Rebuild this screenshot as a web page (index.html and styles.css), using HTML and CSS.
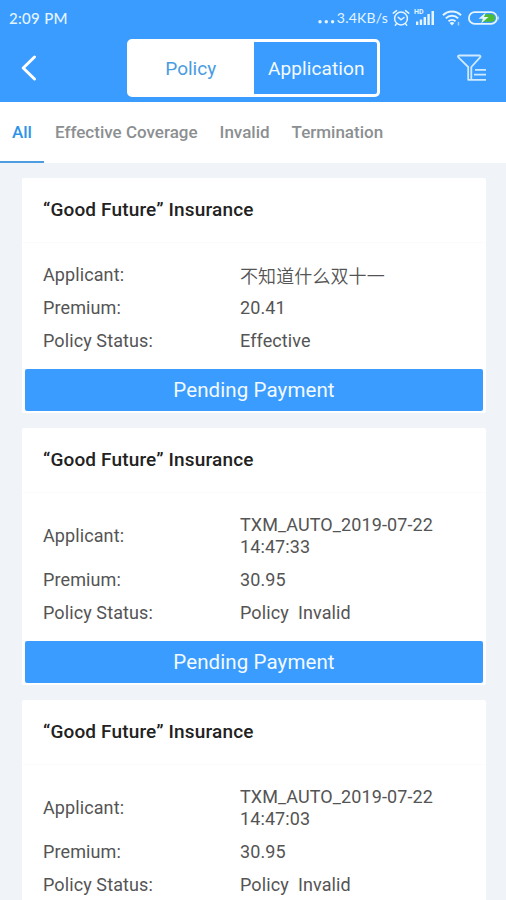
FILE: index.html
```html
<!DOCTYPE html>
<html lang="en">
<head>
<meta charset="utf-8">
<title>Policies</title>
<link rel="stylesheet" href="styles.css">
</head>
<body>
<header class="header">
  <div class="status">
    <span class="clock">2:09 PM</span>
    <svg class="dots" width="17" height="16" viewBox="0 0 17 16"><g fill="currentColor"><circle cx="2" cy="11.7" r="1.7"/><circle cx="8.3" cy="11.7" r="1.7"/><circle cx="14.6" cy="11.7" r="1.7"/></g></svg>
    <span class="speed">3.4KB/s</span>
    <svg class="alarm" width="18" height="18" viewBox="0 0 18 18" fill="none" stroke="currentColor" stroke-width="1.5" stroke-linecap="round"><circle cx="9" cy="9.5" r="6.4"/><path d="M1.3 4.2 4.5 1.6M16.7 4.2 13.5 1.6M6.2 8.3 9 10.8l3-2.3M4.6 14.6l-1.3 1.6M13.4 14.6l1.3 1.6"/></svg>
    <div class="signal">
      <span class="hd">HD</span>
      <svg width="21" height="15" viewBox="0 0 21 15" fill="currentColor"><path d="M2 11.5h2.3V15H2zM5.8 9.5h2.3V15H5.8zM9.6 7h2.4v8H9.6zM13.4 4h2.4v11h-2.4zM17.5 1h2.5v14h-2.5z"/></svg>
    </div>
    <svg class="wifi" width="20" height="16" viewBox="0 0 20 16" fill="none" stroke="currentColor" stroke-width="2"><path d="M1 5.2c5-4.9 13-4.9 18 0M3.8 8.4c3.5-3.4 8.9-3.4 12.4 0M6.5 11.3c2-1.9 5-1.9 7 0"/><path d="m10 15.5-2.4-2.6q2.4-1.7 4.8 0z" fill="currentColor" stroke="none"/><path d="M16.5 12v3.5" stroke-width="1.5" opacity=".6"/></svg>
    <svg class="battery" width="32" height="14" viewBox="0 0 32 14"><rect x=".9" y="1.2" width="28" height="11.6" rx="5.8" fill="none" stroke="currentColor" stroke-width="1.8"/><path d="M15 3.2h8.2a3.8 3.8 0 0 1 0 7.6H13z" fill="#4dbc35"/><path d="M30.2 4.5q1.6 2.5 0 5z" fill="currentColor"/><path d="M17.8 1.5 10.5 7.8h4.4l-1.8 4.8 7.4-6.5H16z" fill="currentColor"/></svg>
  </div>
  <div class="navbar">
    <svg class="back" width="18" height="28" viewBox="0 0 18 28"><path d="M14.5 3 3.2 14l11.3 11" fill="none" stroke="currentColor" stroke-width="3" stroke-linecap="round" stroke-linejoin="round"/></svg>
    <div class="segment">
      <span class="segment-item segment-on">Policy</span>
      <span class="segment-item segment-off">Application</span>
    </div>
    <svg class="filter" width="30" height="28" viewBox="0 0 30 28" fill="none" stroke="currentColor" stroke-width="1.8" stroke-linejoin="round"><path d="M15 25.8h-3.8V13L1.2 3.2Q.5 1.5 2.4 1.5h19.7q1.9 0 1.2 1.7L14.3 13v12.5"/><path d="M18 15.8H29M17 20.6H29M15 25.8H29"/></svg>
  </div>
</header>
<nav class="tabs">
  <span class="tab tab-active">All</span>
  <span class="tab tab-coverage">Effective Coverage</span>
  <span class="tab">Invalid</span>
  <span class="tab">Termination</span>
</nav>
<main class="list">
  <section class="card">
    <h2 class="title">“Good Future” Insurance</h2>
    <dl class="details">
      <dt>Applicant:</dt><dd class="cjk">不知道什么双十一</dd>
      <dt>Premium:</dt><dd>20.41</dd>
      <dt>Policy Status:</dt><dd>Effective</dd>
    </dl>
    <div class="pay">Pending Payment</div>
  </section>
  <section class="card">
    <h2 class="title">“Good Future” Insurance</h2>
    <dl class="details">
      <dt>Applicant:</dt><dd>TXM_AUTO_2019-07-22<br>14:47:33</dd>
      <dt>Premium:</dt><dd>30.95</dd>
      <dt>Policy Status:</dt><dd>Policy&nbsp; Invalid</dd>
    </dl>
    <div class="pay">Pending Payment</div>
  </section>
  <section class="card card-last">
    <h2 class="title">“Good Future” Insurance</h2>
    <dl class="details">
      <dt>Applicant:</dt><dd>TXM_AUTO_2019-07-22<br>14:47:03</dd>
      <dt>Premium:</dt><dd>30.95</dd>
      <dt>Policy Status:</dt><dd>Policy&nbsp; Invalid</dd>
    </dl>
  </section>
</main>
</body>
</html>
```
FILE: styles.css
```css
* { box-sizing: border-box; }
body {
  margin: 0;
  height: 900px;
  overflow: hidden;
  background: #f0f4f8;
  font-family: Roboto, "Noto Sans CJK SC", sans-serif;
  color: #545454;
}
svg { display: block; flex: none; }
.header { height: 102px; background: #3a9cff; color: #fff; }
.status {
  display: flex;
  align-items: center;
  height: 35px;
  padding: 0 6px 0 9px;
  color: #e4f5ff;
  font-family: Lato, sans-serif;
  white-space: nowrap;
}
.clock { font-size: 15px; font-weight: 500; letter-spacing: .3px; }
.dots { margin-left: auto; }
.speed { font-size: 14px; letter-spacing: .2px; margin-left: 2px; }
.alarm { margin-left: 4px; }
.signal { position: relative; margin-left: 4px; }
.hd { position: absolute; left: 0; top: -1px; font: bold 7px/7px Roboto, sans-serif; }
.wifi { margin-left: 7px; }
.battery { margin-left: 6px; }
.navbar {
  display: flex;
  align-items: center;
  height: 66px;
  padding: 0 19px 0 20px;
}
.segment {
  display: flex;
  width: 253px;
  height: 58px;
  margin-left: 89px;
  border: 3px solid #fff;
  border-radius: 5px;
}
.segment-item {
  flex: 1;
  display: flex;
  align-items: center;
  justify-content: center;
  font-size: 19px;
}
.segment-on { padding-right: 2px; background: #fff; color: #4a9ce0; }
.segment-off { padding-left: 2px; color: #f4fbff; letter-spacing: .1px; }
.filter { margin-left: auto; color: #cfeaff; }
.tabs {
  display: flex;
  gap: 22px;
  height: 61px;
  padding-left: 12px;
  background: #fff;
  color: #8c8f91;
  font-size: 17px;
  font-weight: 500;
  line-height: 61px;
}
.tab-active {
  margin-left: -12px;
  width: 44px;
  padding-left: 12px;
  color: #2f93e8;
  border-bottom: 2px solid #4d9de0;
}
.tab-coverage { margin-left: -11px; }
.list {
  display: flex;
  flex-direction: column;
  gap: 15px;
  height: 737px;
  padding: 15px 20px 0 22px;
}
.card { padding-bottom: 2px; background: #fff; border-radius: 2px; flex: none; }
.card-last { flex: 1; padding: 0; border-radius: 2px 2px 0 0; }
.title {
  margin: 0;
  height: 65px;
  padding-left: 21px;
  border-bottom: 1px solid #fafbfb;
  color: #222;
  font-size: 19px;
  font-weight: 500;
  line-height: 64px;
  letter-spacing: .15px;
}
.details {
  display: grid;
  grid-template-columns: 197px 1fr;
  row-gap: 11px;
  align-items: center;
  margin: 0;
  padding: 21px 0 17px 21px;
  font-size: 18px;
  line-height: 22px;
  letter-spacing: .1px;
}
.card-last .details { padding-bottom: 0; }
.details dd { margin: 0; }
.details .cjk { margin-top: -1px; font-family: "Noto Sans CJK SC", sans-serif; font-weight: 350; line-height: 20px; }
.pay {
  height: 42px;
  margin: 0 3px;
  border-radius: 2px;
  background: #3a9cff;
  color: #f2faff;
  font-size: 20.5px;
  line-height: 42px;
  letter-spacing: .1px;
  text-align: center;
}
```
